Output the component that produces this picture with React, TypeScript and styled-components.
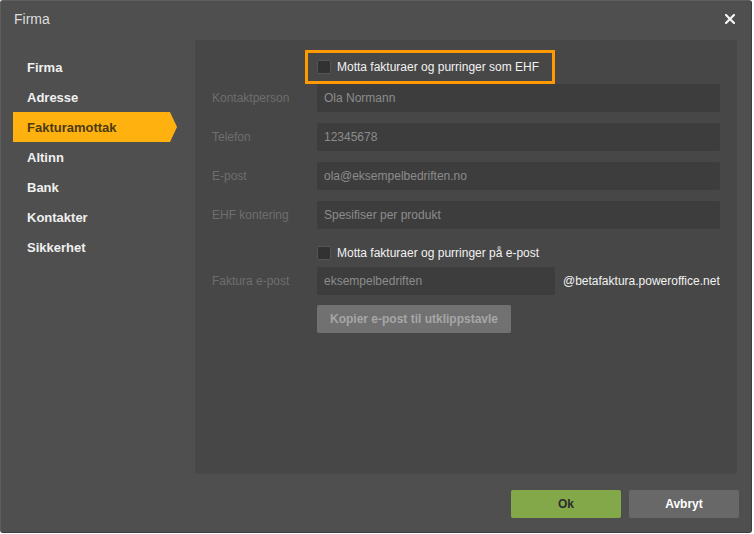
import React from 'react';
import styled, { createGlobalStyle } from 'styled-components';

const GlobalStyle = createGlobalStyle`
  html, body {
    margin: 0;
    padding: 0;
    background: #ffffff;
  }

  body {
    font-family: 'Liberation Sans', Arial, sans-serif;
  }
`;

const menuItems = ['Firma', 'Adresse', 'Fakturamottak', 'Altinn', 'Bank', 'Kontakter', 'Sikkerhet'];
const activeItem = 'Fakturamottak';

const Dialog = styled.div`
  width: 752px;
  height: 533px;
  box-sizing: border-box;
  display: flex;
  flex-direction: column;
  background: #4f4f4f;
  border: 1px solid #5e5e5e;
  border-right-color: #3e3e3e;
  border-bottom-color: #3e3e3e;
  border-radius: 3px;
`;

const Header = styled.div`
  height: 35px;
  display: flex;
  align-items: center;
  justify-content: space-between;
  padding: 0 15px 0 13px;
  box-sizing: border-box;
`;

const Title = styled.span`
  font-size: 14px;
  color: #dcdcdc;
`;

const CloseButton = styled.button`
  width: 12px;
  height: 12px;
  padding: 0;
  border: none;
  background: none;
  display: flex;
  align-items: center;
  justify-content: center;
  cursor: pointer;
`;

const Body = styled.div`
  flex: 1;
  display: flex;
  padding-top: 4px;
  min-height: 0;
`;

const Sidebar = styled.nav`
  width: 194px;
  box-sizing: border-box;
  padding: 12px 0 0 12px;
  display: flex;
  flex-direction: column;
`;

const MenuItem = styled.div<{ $active?: boolean }>`
  height: 30px;
  width: 164px;
  box-sizing: border-box;
  padding-left: 14px;
  display: flex;
  align-items: center;
  font-size: 13px;
  font-weight: bold;
  color: ${(p) => (p.$active ? '#4b3a12' : '#f0f0f0')};
  background: ${(p) => (p.$active ? '#ffb20f' : 'transparent')};
  clip-path: polygon(0 0, 157px 0, 100% 50%, 157px 100%, 0 100%);
  cursor: pointer;
`;

const Column = styled.div`
  flex: 1;
  display: flex;
  flex-direction: column;
`;

const Panel = styled.section`
  width: 542px;
  height: 434px;
  box-sizing: border-box;
  background: #474747;
  border-radius: 2px;
  padding: 10px 17px 0 17px;
  display: flex;
  flex-direction: column;
`;

const Row = styled.div<{ $gap?: number; $height?: number }>`
  display: grid;
  grid-template-columns: 105px 1fr;
  align-items: center;
  margin-top: ${(p) => p.$gap ?? 0}px;
  height: ${(p) => p.$height ?? 28}px;
`;

const Label = styled.label`
  font-size: 12px;
  color: #6e6e6e;
`;

const Field = styled.div`
  display: flex;
  align-items: center;
  gap: 8px;
  height: 100%;
`;

const TextInput = styled.input<{ $width?: number }>`
  width: ${(p) => (p.$width ? `${p.$width}px` : '100%')};
  height: 28px;
  box-sizing: border-box;
  border: none;
  border-radius: 2px;
  background: #3d3d3d;
  color: #8c8c8c;
  font-family: 'Liberation Sans', Arial, sans-serif;
  font-size: 12px;
  padding: 0 7px;
  outline: none;
`;

const Highlight = styled.div`
  margin-left: -12px;
  height: 34px;
  box-sizing: border-box;
  border: 3px solid #ff9a00;
  padding: 0 13px 0 9px;
  display: inline-flex;
  align-items: center;
  justify-self: start;
`;

const CheckLabel = styled.label`
  display: inline-flex;
  align-items: center;
  gap: 6px;
  font-size: 12px;
  color: #f2f2f2;
  cursor: pointer;
`;

const Checkbox = styled.input.attrs({ type: 'checkbox' })`
  appearance: none;
  margin: 0;
  width: 14px;
  height: 14px;
  box-sizing: border-box;
  border: 1px solid #555555;
  border-radius: 2px;
  background: #323232;
`;

const Suffix = styled.span`
  font-size: 12px;
  color: #f2f2f2;
  white-space: nowrap;
`;

const CopyButton = styled.button`
  width: 194px;
  height: 28px;
  border: none;
  border-radius: 2px;
  background: #717171;
  color: #a6a6a6;
  font-family: 'Liberation Sans', Arial, sans-serif;
  font-size: 12px;
  font-weight: bold;
  padding: 0;
`;

const Footer = styled.div`
  height: 58px;
  box-sizing: border-box;
  padding: 16px 12px 0 0;
  display: flex;
  justify-content: flex-end;
  gap: 8px;
`;

const FooterButton = styled.button<{ $variant: 'ok' | 'cancel' }>`
  width: 110px;
  height: 28px;
  border: none;
  border-radius: 2px;
  background: ${(p) => (p.$variant === 'ok' ? '#83a84a' : '#686868')};
  color: ${(p) => (p.$variant === 'ok' ? '#2c2c2c' : '#ffffff')};
  font-family: 'Liberation Sans', Arial, sans-serif;
  font-size: 12px;
  font-weight: bold;
  cursor: pointer;
`;

const fields = [
  { label: 'Kontaktperson', value: 'Ola Normann' },
  { label: 'Telefon', value: '12345678' },
  { label: 'E-post', value: 'ola@eksempelbedriften.no' },
  { label: 'EHF kontering', value: 'Spesifiser per produkt' },
];

export default function App() {
  return (
    <>
      <GlobalStyle />
      <Dialog>
        <Header>
          <Title>Firma</Title>
          <CloseButton aria-label="Lukk">
            <svg width="10" height="10" viewBox="0 0 10 10">
              <path d="M1 1 L9 9 M9 1 L1 9" stroke="#f4f4f4" strokeWidth="2.2" strokeLinecap="square" />
            </svg>
          </CloseButton>
        </Header>
        <Body>
          <Sidebar>
            {menuItems.map((item) => (
              <MenuItem key={item} $active={item === activeItem}>
                {item}
              </MenuItem>
            ))}
          </Sidebar>
          <Column>
            <Panel>
              <Row $height={34}>
                <span />
                <Highlight>
                  <CheckLabel>
                    <Checkbox />
                    Motta fakturaer og purringer som EHF
                  </CheckLabel>
                </Highlight>
              </Row>
              {fields.map((f, i) => (
                <Row key={f.label} $gap={i === 0 ? 0 : 11}>
                  <Label>{f.label}</Label>
                  <TextInput defaultValue={f.value} />
                </Row>
              ))}
              <Row $gap={13} $height={22}>
                <span />
                <CheckLabel>
                  <Checkbox />
                  Motta fakturaer og purringer på e-post
                </CheckLabel>
              </Row>
              <Row $gap={3}>
                <Label>Faktura e-post</Label>
                <Field>
                  <TextInput $width={238} defaultValue="eksempelbedriften" />
                  <Suffix>@betafaktura.poweroffice.net</Suffix>
                </Field>
              </Row>
              <Row $gap={10}>
                <span />
                <CopyButton>Kopier e-post til utklippstavle</CopyButton>
              </Row>
            </Panel>
            <Footer>
              <FooterButton $variant="ok">Ok</FooterButton>
              <FooterButton $variant="cancel">Avbryt</FooterButton>
            </Footer>
          </Column>
        </Body>
      </Dialog>
    </>
  );
}
